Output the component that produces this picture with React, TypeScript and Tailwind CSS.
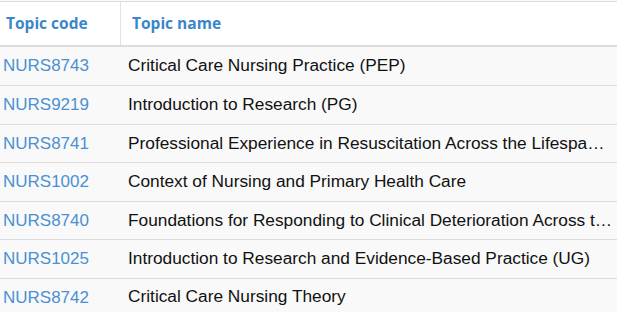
const topics = [
  { code: 'NURS8743', name: 'Critical Care Nursing Practice (PEP)' },
  { code: 'NURS9219', name: 'Introduction to Research (PG)' },
  { code: 'NURS8741', name: 'Professional Experience in Resuscitation Across the Lifespan (PEP)' },
  { code: 'NURS1002', name: 'Context of Nursing and Primary Health Care' },
  { code: 'NURS8740', name: 'Foundations for Responding to Clinical Deterioration Across the Lifespan' },
  { code: 'NURS1025', name: 'Introduction to Research and Evidence-Based Practice (UG)' },
  { code: 'NURS8742', name: 'Critical Care Nursing Theory' },
];

export default function App() {
  return (
    <div className="w-[617px] h-[312px] overflow-hidden bg-[#f9f9f9]">
      <div className="mt-px border-t border-[#dddddd] bg-white flex h-[46px] border-b-2 border-b-[#dddddd] font-['Open_Sans',sans-serif] text-[15.5px] font-bold text-[#3a86c8]">
        <div className="w-[121px] shrink-0 border-r border-[#e2e2e2] pl-[6px] flex items-center">Topic code</div>
        <div className="flex-1 pl-[11px] flex items-center">Topic name</div>
      </div>
      {topics.map((t, i) => (
        <div
          key={t.code}
          className={`flex h-[38.45px] items-center font-['Liberation_Sans',Arial,sans-serif] ${i > 0 ? 'border-t border-[#dddddd]' : ''}`}
        >
          <div className="w-[122px] shrink-0 pl-[3px] text-[17px] text-[#4a90d2]">{t.code}</div>
          <div className="flex-1 min-w-0 pl-[6px] pr-[4px] truncate text-[17.3px] text-[#111111]">{t.name}</div>
        </div>
      ))}
    </div>
  );
}
